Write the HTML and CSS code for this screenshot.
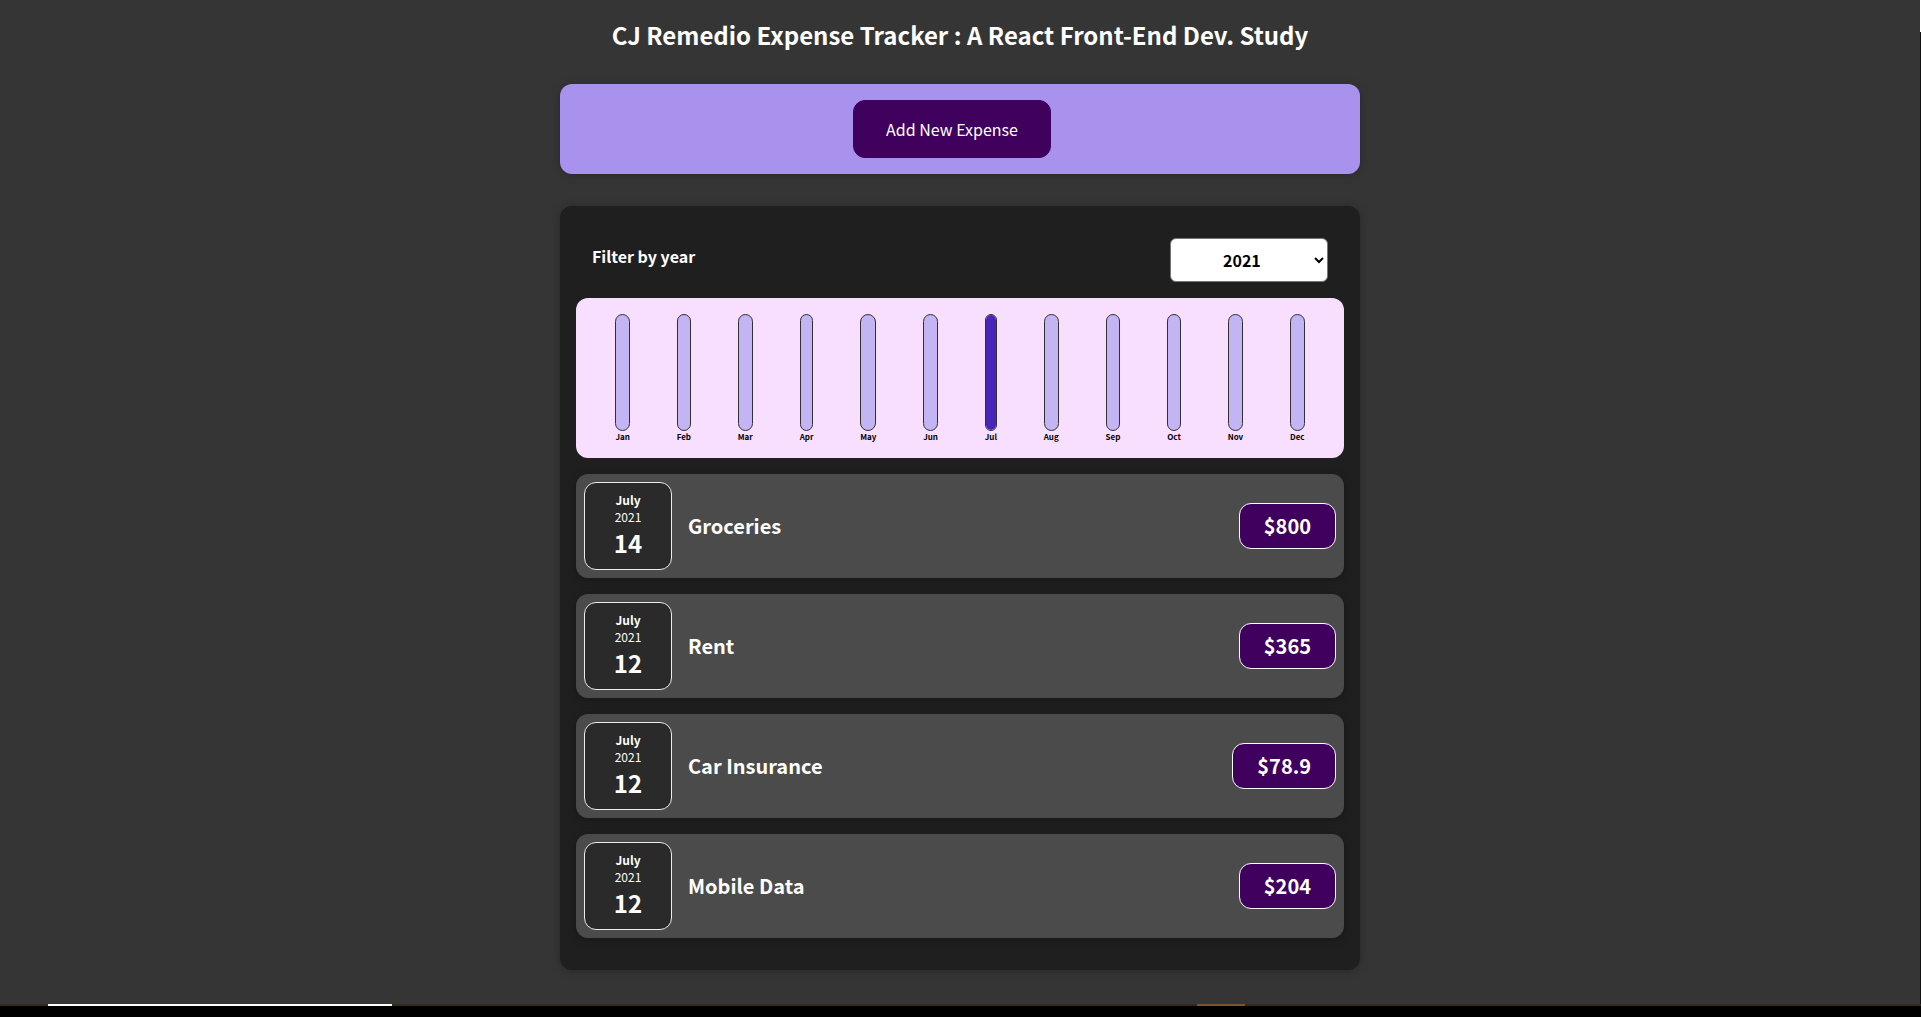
FILE: index.html
```html
<!DOCTYPE html>
<html lang="en">
<head>
  <meta charset="utf-8">
  <meta name="viewport" content="width=device-width, initial-scale=1">
  <title>CJ Remedio Expense Tracker</title>
  <link rel="stylesheet" href="styles.css">
</head>
<body>
  <div class="screen">
    <main class="app">
      <h1 class="app-title">CJ Remedio Expense Tracker : A React Front-End Dev. Study</h1>

      <section class="new-expense">
        <button class="new-expense-button" type="button">Add New Expense</button>
      </section>

      <section class="expenses">
        <div class="filter">
          <label class="filter-label" for="year">Filter by year</label>
          <select class="filter-select" id="year">
            <option>2022</option>
            <option selected>2021</option>
            <option>2020</option>
            <option>2019</option>
          </select>
        </div>

        <div class="chart">
          <div class="chart-bar"><div class="chart-bar-inner"></div><div class="chart-bar-label">Jan</div></div>
          <div class="chart-bar"><div class="chart-bar-inner"></div><div class="chart-bar-label">Feb</div></div>
          <div class="chart-bar"><div class="chart-bar-inner"></div><div class="chart-bar-label">Mar</div></div>
          <div class="chart-bar"><div class="chart-bar-inner"></div><div class="chart-bar-label">Apr</div></div>
          <div class="chart-bar"><div class="chart-bar-inner"></div><div class="chart-bar-label">May</div></div>
          <div class="chart-bar"><div class="chart-bar-inner"></div><div class="chart-bar-label">Jun</div></div>
          <div class="chart-bar"><div class="chart-bar-inner"><div class="chart-bar-fill" style="height: 100%"></div></div><div class="chart-bar-label">Jul</div></div>
          <div class="chart-bar"><div class="chart-bar-inner"></div><div class="chart-bar-label">Aug</div></div>
          <div class="chart-bar"><div class="chart-bar-inner"></div><div class="chart-bar-label">Sep</div></div>
          <div class="chart-bar"><div class="chart-bar-inner"></div><div class="chart-bar-label">Oct</div></div>
          <div class="chart-bar"><div class="chart-bar-inner"></div><div class="chart-bar-label">Nov</div></div>
          <div class="chart-bar"><div class="chart-bar-inner"></div><div class="chart-bar-label">Dec</div></div>
        </div>

        <ul class="expense-list">
          <li class="expense">
            <div class="date"><div class="date-month">July</div><div class="date-year">2021</div><div class="date-day">14</div></div>
            <h2 class="expense-name">Groceries</h2>
            <div class="expense-price">$800</div>
          </li>
          <li class="expense">
            <div class="date"><div class="date-month">July</div><div class="date-year">2021</div><div class="date-day">12</div></div>
            <h2 class="expense-name">Rent</h2>
            <div class="expense-price">$365</div>
          </li>
          <li class="expense">
            <div class="date"><div class="date-month">July</div><div class="date-year">2021</div><div class="date-day">12</div></div>
            <h2 class="expense-name">Car Insurance</h2>
            <div class="expense-price">$78.9</div>
          </li>
          <li class="expense">
            <div class="date"><div class="date-month">July</div><div class="date-year">2021</div><div class="date-day">12</div></div>
            <h2 class="expense-name">Mobile Data</h2>
            <div class="expense-price">$204</div>
          </li>
        </ul>
      </section>
    </main>
    <div class="edge"></div>
  </div>
  <footer class="taskbar"></footer>
</body>
</html>
```

FILE: styles.css
```css
* {
  box-sizing: border-box;
}

body {
  margin: 0;
  min-height: 100vh;
  display: flex;
  flex-direction: column;
  background: #353535;
  color: #fff;
  font-family: "Noto Sans CJK JP", "Noto Sans", sans-serif;
}

.screen {
  flex: 1;
  display: flex;
}

.app {
  flex: 1;
  padding: 16px 16px 34px;
}

/* Sliver of the neighbouring window along the right side */
.edge {
  width: 1px;
  background: linear-gradient(#fff 32px, #111 32px);
}

.app-title {
  margin: 0 0 30px;
  font-size: 24px;
  line-height: 38px;
  text-align: center;
}

.new-expense,
.expenses {
  max-width: 800px;
  margin: 0 auto;
  border-radius: 12px;
  box-shadow: 0 1px 8px rgba(0, 0, 0, 0.25);
}

.new-expense {
  margin-bottom: 32px;
  padding: 16px;
  background: #a892ee;
  text-align: center;
}

.new-expense-button {
  margin-right: 16px;
  padding: 16px 32px;
  border: 1px solid #40005d;
  border-radius: 12px;
  background: #40005d;
  color: #fff;
  font: inherit;
  font-size: 16px;
  line-height: 24px;
  vertical-align: top;
  cursor: pointer;
}

.expenses {
  padding: 32px 16px;
  background: #1f1f1f;
}

.filter {
  display: flex;
  justify-content: space-between;
  align-items: center;
  margin-bottom: 16px;
  padding: 0 16px;
}

.filter-label {
  padding-bottom: 8px;
  font-size: 16px;
  line-height: 24px;
  font-weight: bold;
}

.filter-select {
  width: 158px;
  height: 44px;
  padding: 0 48px;
  border: 1px solid #767676;
  border-radius: 6px;
  background: #fff;
  color: #000;
  font: inherit;
  font-size: 16px;
  font-weight: bold;
}

.chart {
  display: flex;
  justify-content: space-around;
  height: 160px;
  margin-bottom: 16px;
  padding: 16px;
  border-radius: 12px;
  background: #f8dfff;
}

.chart-bar {
  display: flex;
  flex-direction: column;
}

.chart-bar-inner {
  flex: 1;
  display: flex;
  flex-direction: column;
  justify-content: flex-end;
  overflow: hidden;
  border: 1px solid #313131;
  border-radius: 12px;
  background: #c3b4f3;
}

.chart-bar-fill {
  background: #4826b9;
}

.chart-bar-label {
  color: #000;
  font-size: 8px;
  line-height: 11px;
  font-weight: bold;
  text-align: center;
}

.expense-list {
  display: grid;
  gap: 16px;
  margin: 0;
  padding: 0;
  list-style: none;
}

.expense {
  display: flex;
  align-items: center;
  gap: 16px;
  padding: 8px;
  border-radius: 12px;
  background: #4b4b4b;
  box-shadow: 0 2px 8px rgba(0, 0, 0, 0.25);
}

.date {
  display: flex;
  flex-direction: column;
  align-items: center;
  justify-content: center;
  width: 88px;
  height: 88px;
  padding-bottom: 2px;
  border: 1px solid #ececec;
  border-radius: 12px;
  background: #2a2a2a;
}

.date-month {
  font-size: 12px;
  line-height: 17px;
  font-weight: bold;
}

.date-year {
  font-size: 12px;
  line-height: 17px;
}

.date-day {
  font-size: 24px;
  line-height: 35px;
  font-weight: bold;
}

.expense-name {
  flex: 1;
  margin: 0;
  font-size: 20px;
  line-height: 30px;
}

.expense-price {
  padding: 8px 24px;
  border: 1px solid #fff;
  border-radius: 12px;
  background: #40005d;
  font-size: 20px;
  line-height: 28px;
  font-weight: bold;
}

.taskbar {
  height: 13px;
  border-top: 2px solid #332a18;
  border-image: linear-gradient(to right, #332a18 48px, #fff 48px, #fff 392px, #332a18 392px, #332a18 1197px, #7d5428 1197px, #7d5428 1245px, #332a18 1245px) 2 0 0 0;
  background: #000;
}
```
